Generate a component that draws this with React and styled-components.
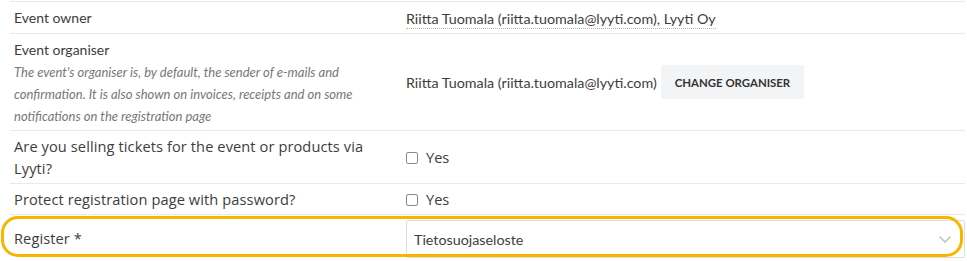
import React from "react";
import styled, { createGlobalStyle } from "styled-components";

const Global = createGlobalStyle`
  html, body { margin: 0; padding: 0; background: #fff; }
  body { font-family: "Lato", "Open Sans", sans-serif; color: #3a3a3a; }
`;

const Table = styled.div`
  position: relative;
  width: 955px;
  margin-left: 10px;
  padding-top: 1px;
`;

const Row = styled.div`
  display: grid;
  grid-template-columns: 388px 1fr;
  border-top: 1px solid #e9e9e9;
  height: ${(p) => p.$h}px;
  box-sizing: border-box;
`;

const Label = styled.div`
  padding-left: 4px;
  padding-right: 16px;
  display: flex;
  flex-direction: column;
  justify-content: ${(p) => (p.$top ? "flex-start" : "center")};
  padding-top: ${(p) => (p.$top ? "5px" : "0")};
  font-family: ${(p) => (p.$alt ? '"Open Sans", sans-serif' : '"Lato", sans-serif')};
  font-size: ${(p) => (p.$alt ? "14.6px" : "14px")};
  letter-spacing: ${(p) => (p.$alt ? "0.1px" : "0")};
  line-height: 22px;
  color: #3d3d3d;
`;

const Help = styled.div`
  font-style: italic;
  font-size: 13px;
  line-height: 22px;
  color: #777;
`;

const Value = styled.div`
  padding-left: 8px;
  display: flex;
  align-items: center;
  gap: 4px;
  font-size: 14.3px;
  color: #3d3d3d;
`;

const Dotted = styled.span`
  border-bottom: 1px dotted #b5b5b5;
  line-height: 19px;
  margin-top: 2px;
`;

const Button = styled.button`
  border: none;
  background: #f3f4f6;
  border-radius: 2px;
  height: 34px;
  padding: 0 14px;
  font-family: "Lato", sans-serif;
  font-weight: 700;
  font-size: 11.4px;
  color: #333;
`;

const Check = styled.span`
  width: 12px;
  height: 12px;
  border: 1px solid #8a8a8a;
  border-radius: 2px;
  box-sizing: border-box;
  display: inline-block;
  margin-top: 2px;
`;

const Yes = styled.span`
  font-family: "Open Sans", sans-serif;
  font-size: 14.6px;
  margin-left: 4px;
`;

const Select = styled.div`
  flex: 1;
  height: 38px;
  margin-top: 5px;
  align-self: flex-start;
  border: 1px solid #dedede;
  border-radius: 2px;
  box-sizing: border-box;
  display: flex;
  align-items: center;
  justify-content: space-between;
  padding: 0 12px 0 7px;
  font-size: 14.3px;
  color: #3d3d3d;
`;

const Highlight = styled.div`
  position: absolute;
  left: -9px;
  top: 216px;
  width: 962px;
  height: 41px;
  border: 3px solid #f7b500;
  border-radius: 17px;
  box-sizing: border-box;
  pointer-events: none;
`;

const Chevron = () => (
  <svg width="14" height="9" viewBox="0 0 14 9" fill="none">
    <path d="M1.5 1.5 L7 7 L12.5 1.5" stroke="#c4c4c4" strokeWidth="1.6" />
  </svg>
);

export default function App() {
  return (
    <>
      <Global />
      <Table>
        <Row $h={32}>
          <Label>Event owner</Label>
          <Value>
            <Dotted>Riitta Tuomala (riitta.tuomala@lyyti.com), Lyyti Oy</Dotted>
          </Value>
        </Row>
        <Row $h={97}>
          <Label $top>
            Event organiser
            <Help>
              The event's organiser is, by default, the sender of e-mails and
              confirmation. It is also shown on invoices, receipts and on some
              notifications on the registration page
            </Help>
          </Label>
          <Value>
            <span>Riitta Tuomala (riitta.tuomala@lyyti.com)</span>
            <Button>CHANGE ORGANISER</Button>
          </Value>
        </Row>
        <Row $h={53}>
          <Label $alt>Are you selling tickets for the event or products via Lyyti?</Label>
          <Value>
            <Check />
            <Yes>Yes</Yes>
          </Value>
        </Row>
        <Row $h={31}>
          <Label $alt>Protect registration page with password?</Label>
          <Value>
            <Check />
            <Yes>Yes</Yes>
          </Value>
        </Row>
        <Row $h={47}>
          <Label $alt>Register *</Label>
          <Value>
            <Select>
              Tietosuojaseloste
              <Chevron />
            </Select>
          </Value>
        </Row>
        <Highlight />
      </Table>
    </>
  );
}
